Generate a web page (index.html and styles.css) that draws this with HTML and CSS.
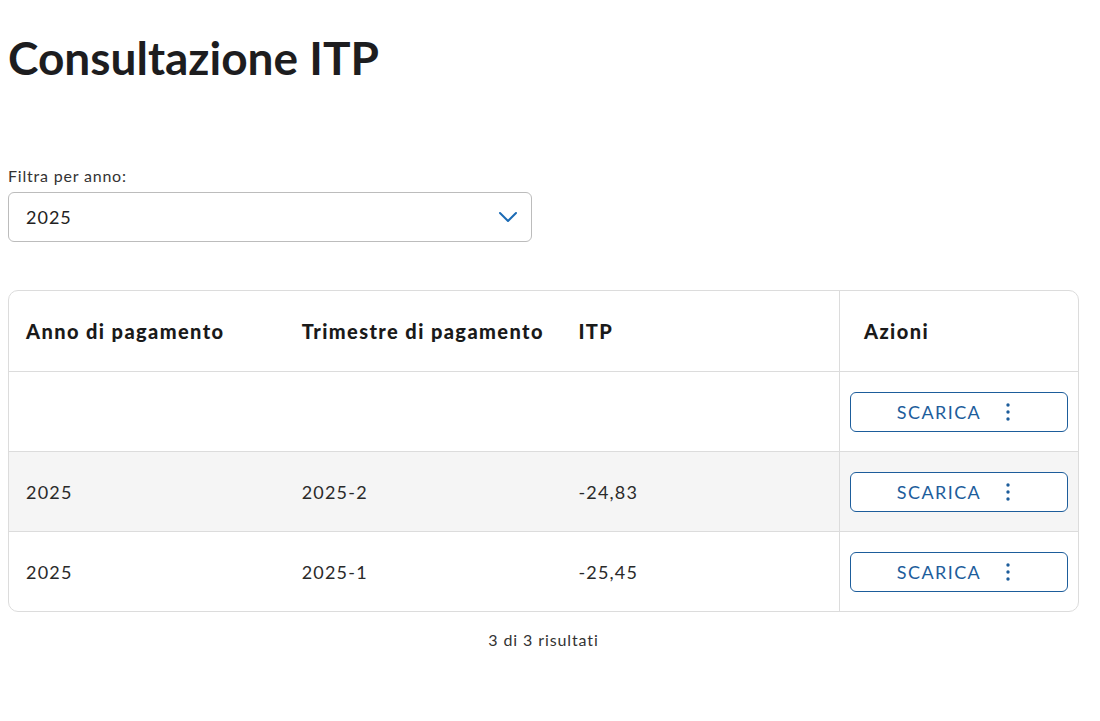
FILE: index.html
```html
<!DOCTYPE html>
<html lang="it">

<head>
  <meta charset="UTF-8">
  <title>Consultazione ITP</title>
  <link rel="stylesheet" href="styles.css">
</head>

<body>
  <h1 class="page-title">Consultazione ITP</h1>

  <div class="filter">
    <label for="anno">Filtra per anno:</label>
    <div class="select" id="anno">
      <span>2025</span>
      <svg width="20" height="12" viewBox="0 0 20 12"><path d="M2 2 L10 10 L18 2" fill="none" stroke="#1b6bb5" stroke-width="2" stroke-linecap="round" stroke-linejoin="round"/></svg>
    </div>
  </div>

  <div class="table-wrap">
    <table>
      <thead>
        <tr>
          <th class="col-anno">Anno di pagamento</th>
          <th class="col-trim">Trimestre di pagamento</th>
          <th class="col-itp">ITP</th>
          <th class="col-azioni">Azioni</th>
        </tr>
      </thead>
      <tbody>
        <tr>
          <td></td>
          <td></td>
          <td></td>
          <td class="col-azioni">
            <button class="btn-scarica">SCARICA
              <svg width="4" height="18" viewBox="0 0 4 18"><circle cx="2" cy="2" r="1.7"/><circle cx="2" cy="9" r="1.7"/><circle cx="2" cy="16" r="1.7"/></svg>
            </button>
          </td>
        </tr>
        <tr class="striped">
          <td>2025</td>
          <td>2025-2</td>
          <td>-24,83</td>
          <td class="col-azioni">
            <button class="btn-scarica">SCARICA
              <svg width="4" height="18" viewBox="0 0 4 18"><circle cx="2" cy="2" r="1.7"/><circle cx="2" cy="9" r="1.7"/><circle cx="2" cy="16" r="1.7"/></svg>
            </button>
          </td>
        </tr>
        <tr>
          <td>2025</td>
          <td>2025-1</td>
          <td>-25,45</td>
          <td class="col-azioni">
            <button class="btn-scarica">SCARICA
              <svg width="4" height="18" viewBox="0 0 4 18"><circle cx="2" cy="2" r="1.7"/><circle cx="2" cy="9" r="1.7"/><circle cx="2" cy="16" r="1.7"/></svg>
            </button>
          </td>
        </tr>
      </tbody>
    </table>
  </div>

  <p class="results">3 di 3 risultati</p>
</body>

</html>
```

FILE: styles.css
```css
body {
  margin: 8px;
  font-family: Lato, "Open Sans", sans-serif;
  color: #222;
  background: #fff;
}

/* titolo */
.page-title {
  font-size: 46px;
  font-weight: 700;
  margin: 22px 0 0;
  line-height: 56px;
  color: #1d1d1f;
}

/* filtro */
.filter {
  margin-top: 80px;
  width: 524px;
}

.filter label {
  display: block;
  font-size: 16px;
  line-height: 20px;
  color: #333;
  letter-spacing: 0.8px;
  margin-bottom: 6px;
}

.select {
  height: 48px;
  border: 1px solid #bcbcbc;
  border-radius: 6px;
  display: flex;
  align-items: center;
  justify-content: space-between;
  padding: 0 13px 0 17px;
  font-size: 18px;
  letter-spacing: 1px;
  color: #222;
}

/* tabella */
.table-wrap {
  margin-top: 48px;
  width: 1069px;
  border: 1px solid #dcdcdc;
  border-radius: 10px;
  overflow: hidden;
}

table {
  width: 100%;
  border-collapse: collapse;
}

th,
td {
  height: 79px;
  padding: 0 0 0 17px;
  text-align: left;
  font-size: 18px;
  border-top: 1px solid #dcdcdc;
}

thead th {
  border-top: none;
  height: 80px;
  font-size: 20px;
  font-weight: 900;
  letter-spacing: 1.4px;
  color: #1a1a1a;
}

td {
  color: #2a2a2a;
  letter-spacing: 1.2px;
}

.col-anno { width: 259px; }
.col-trim { width: 260px; }
.col-itp { width: 261px; }

th.col-azioni,
td.col-azioni {
  border-left: 1px solid #dcdcdc;
  padding: 0 10px;
}

th.col-azioni {
  padding-left: 24px;
}

.striped td {
  background: #f5f5f5;
}

.btn-scarica {
  width: 218px;
  height: 40px;
  border: 1px solid #1d5d9b;
  border-radius: 6px;
  background: #fff;
  color: #1d5d9b;
  font-family: Lato, "Open Sans", sans-serif;
  font-size: 18px;
  letter-spacing: 1.4px;
  cursor: pointer;
  display: flex;
  align-items: center;
  justify-content: center;
  gap: 25px;
  padding: 0 11px 0 0;
}

.btn-scarica svg {
  fill: #1d5d9b;
}

.results {
  text-align: center;
  font-size: 16px;
  line-height: 20px;
  color: #333;
  margin: 18px 0 0;
  width: 1071px;
  letter-spacing: 0.9px;
}
```
